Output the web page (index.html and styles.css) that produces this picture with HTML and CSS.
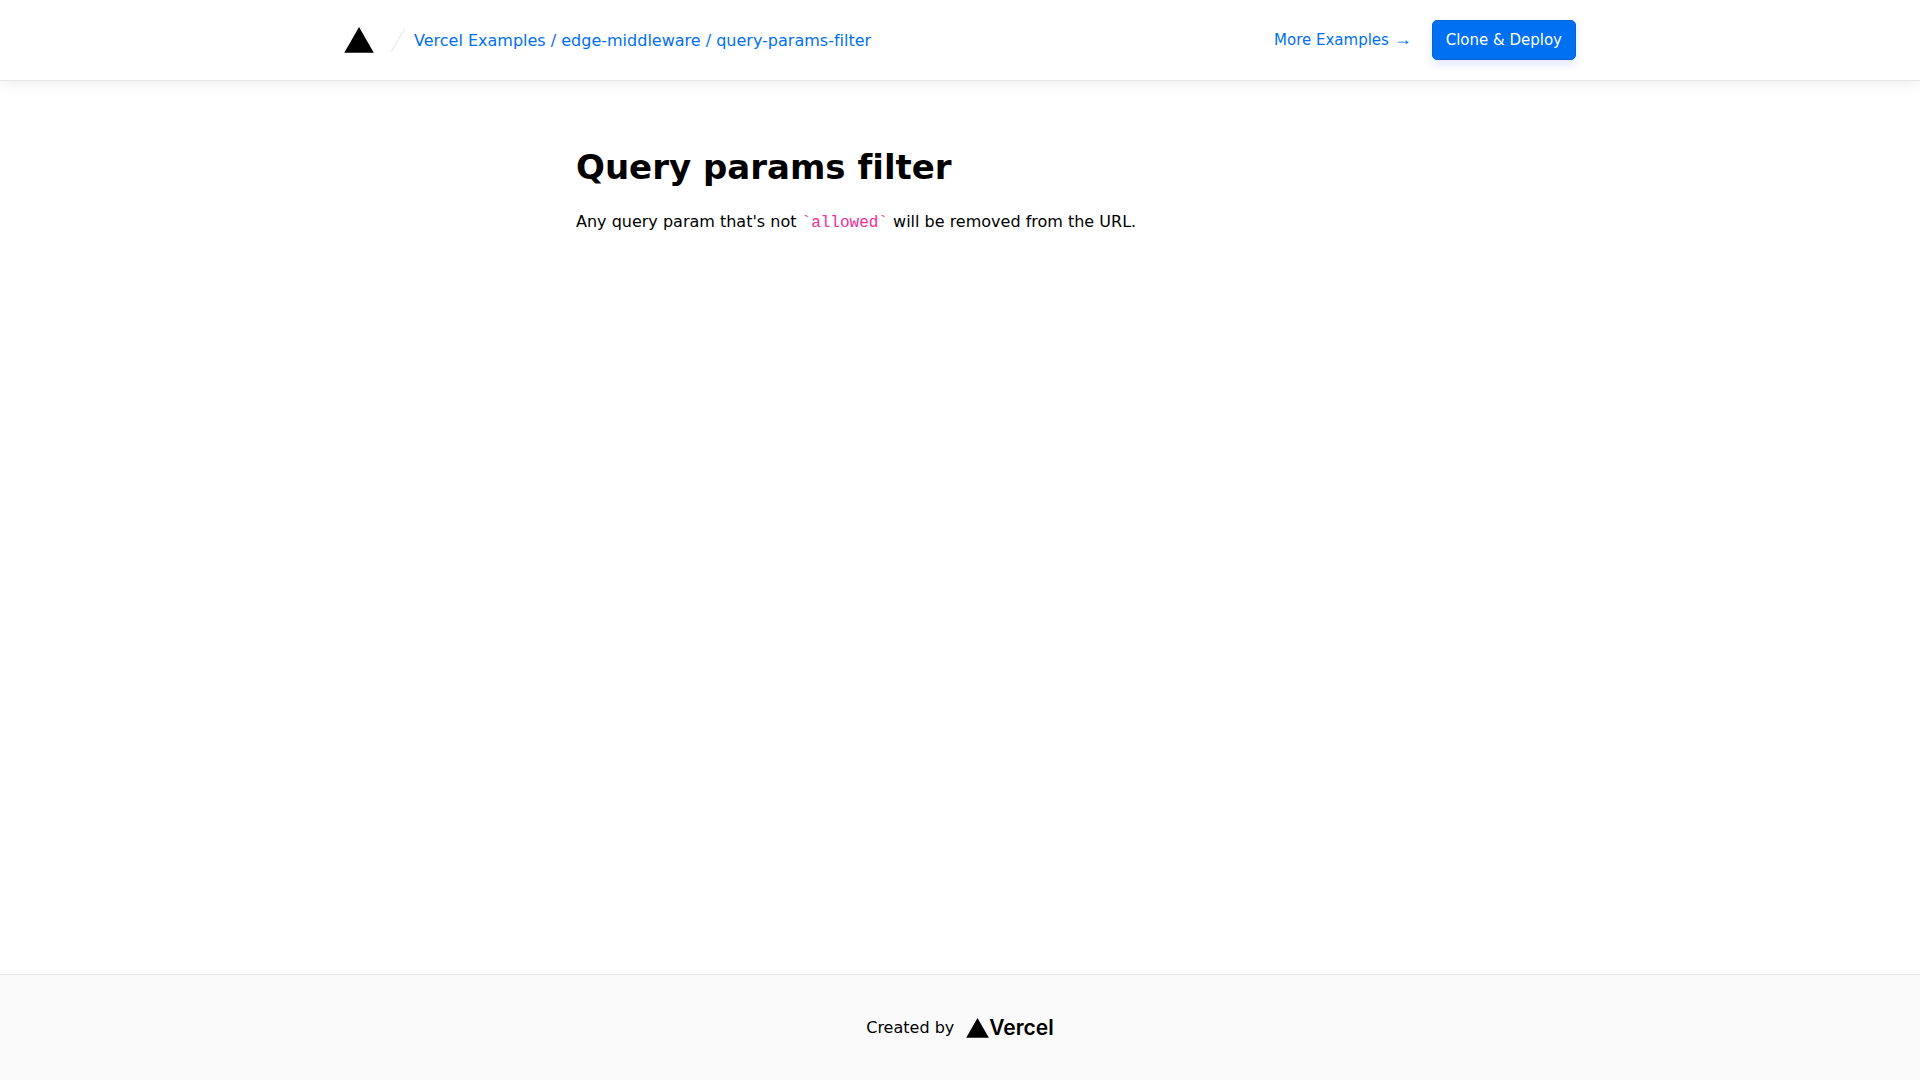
FILE: index.html
```html
<!DOCTYPE html>
<html lang="en">
<head>
    <meta charset="UTF-8">
    <meta name="viewport" content="width=device-width, initial-scale=1.0">
    <title>Query params filter - Vercel Examples</title>
    <link rel="stylesheet" href="styles.css">
</head>
<body>

<header class="navbar">
    <nav class="navbar-inner">
        <a href="#" class="home" aria-label="Vercel">
            <svg width="30" height="26" viewBox="0 0 75 65" fill="#000">
                <path d="M37.59.25l36.95 64H.64l36.95-64z"/>
            </svg>
        </a>
        <svg class="slash" width="32" height="32" viewBox="0 0 24 24" fill="none" stroke="#eaeaea" stroke-width="1" stroke-linecap="round">
            <path d="M16.88 3.549L7.12 20.451"/>
        </svg>
        <div class="path">
            <a href="#">Vercel Examples / edge-middleware / query-params-filter</a>
        </div>
        <div class="actions">
            <a href="#">More Examples <span class="arrow">→</span></a>
            <button type="button" class="deploy">Clone &amp; Deploy</button>
        </div>
    </nav>
</header>

<main class="page">
    <h1>Query params filter</h1>
    <p>Any query param that's not <code>`allowed`</code> will be removed from the URL.</p>
</main>

<footer class="footer">
    <span>Created by</span>
    <a href="#" class="brand">
        <svg width="23" height="20" viewBox="0 0 75 65" fill="#000">
            <path d="M37.59.25l36.95 64H.64l36.95-64z"/>
        </svg>
        <span>Vercel</span>
    </a>
</footer>

</body>
</html>
```

FILE: styles.css
```css
* {
    box-sizing: border-box;
}

body {
    display: flex;
    flex-direction: column;
    min-height: 100vh;
    margin: 0;
    font-family: "DejaVu Sans", sans-serif;
    font-size: 16px;
    line-height: 25px;
    font-variant-ligatures: none;
    color: #000;
    background-color: #fff;
}

a {
    color: #0070f3;
    text-decoration: none;
}

svg {
    display: block;
}

/* Header */
.navbar {
    border-bottom: 1px solid #e5e7eb;
    box-shadow: 0 0 15px rgba(0, 0, 0, 0.1);
}

.navbar-inner {
    display: flex;
    align-items: center;
    max-width: 1280px;
    margin: 0 auto;
    padding: 20px 24px;
}

.slash {
    margin-left: 8px;
}

.path {
    flex: 1;
}

.actions {
    display: flex;
    align-items: center;
    gap: 20px;
    font-size: 15px;
}

.arrow {
    font-family: "Liberation Sans", sans-serif;
    font-size: 18px;
    line-height: 18px;
}

.deploy {
    height: 40px;
    padding: 1px 13px 0;
    border: 1px solid #0064d9;
    border-radius: 5px;
    background-color: #0070f3;
    color: #fff;
    font-family: inherit;
    font-size: 15px;
    line-height: 25px;
    box-shadow: 0 4px 10px rgba(0, 50, 255, 0.12);
    cursor: pointer;
}

/* Content */
.page {
    flex: 1;
    width: 100%;
    max-width: 816px;
    margin: 0 auto;
    padding: 64px 24px;
}

h1 {
    margin: 0 0 20px;
    font-size: 34px;
    line-height: 44px;
}

p {
    margin: 0;
}

code {
    font-family: "Liberation Mono", monospace;
    color: #f72c94;
}

/* Footer */
.footer {
    display: flex;
    align-items: center;
    justify-content: center;
    gap: 12px;
    padding: 40px 24px;
    border-top: 1px solid #e5e5e5;
    background-color: #fafafa;
}

.brand {
    display: flex;
    align-items: center;
    font-family: Inter, sans-serif;
    font-size: 21px;
    font-weight: 600;
    color: #000;
}
```
